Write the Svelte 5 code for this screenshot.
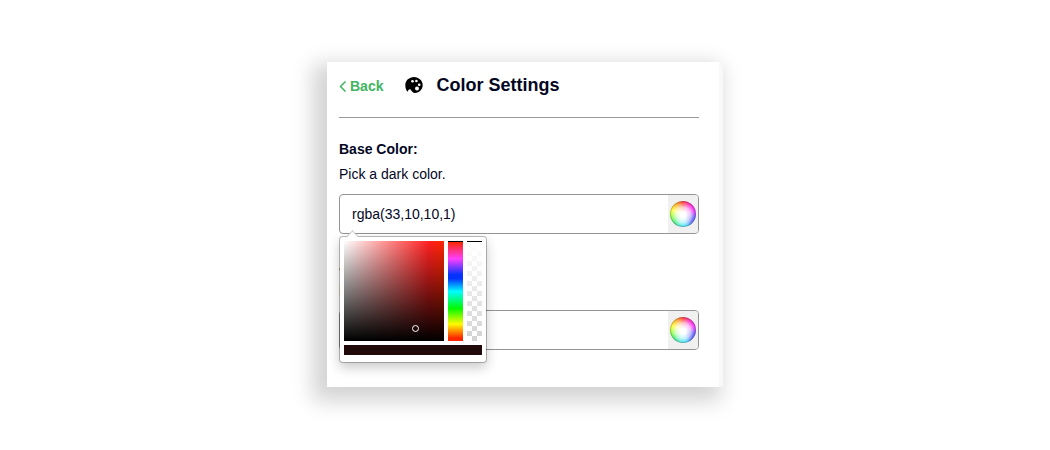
<script>
  let fields = $state([
    { id: 'base', label: 'Base Color:', hint: 'Pick a dark color.', value: 'rgba(33,10,10,1)', open: true },
    { id: 'accent', label: 'Accent Color:', hint: 'Pick a light color.', value: '', open: false }
  ]);
</script>

<main>
  <section class="panel">
    <header>
      <a class="back" href="#back">
        <svg width="8" height="12" viewBox="0 0 8 12" aria-hidden="true"><path d="M6.500 1.500 1.500 6.500l5 5" fill="none" stroke="currentColor" stroke-width="1.500" /></svg>
        Back
      </a>
      <svg class="palette" width="18" height="18" viewBox="0 0 18 18" aria-hidden="true">
        <path d="M9 1C4.200 1 .3 4.600.3 9.200c0 3 .9 5.300 2.500 6.600.2-1.500.9-2.600 2-2.600 1.400 0 1.300 1.700 2.500 2.600.9.800 1.700 1.200 2.700 1.200 4.500-.3 7.700-3.800 7.700-8S13.800 1 9 1Z" />
        <g fill="#fff"><circle cx="7.500" cy="5.300" r="1.300" /><circle cx="11.400" cy="5" r="1.300" /><circle cx="14.200" cy="8.700" r="1.300" /><circle cx="12" cy="12.600" r="2" /></g>
      </svg>
      <h1>Color Settings</h1>
    </header>

    {#each fields as field (field.id)}
      <div class="field">
        <label for={field.id}>{field.label}</label>
        <p>{field.hint}</p>
        <div class="box">
          <input id={field.id} type="text" bind:value={field.value} />
          <button type="button" aria-label="Choose color" onclick={() => (field.open = !field.open)}>
            <span class="wheel"></span>
          </button>
          {#if field.open}
            <div class="picker">
              <div class="channels">
                <div class="shade"><span class="dot"></span></div>
                <div class="hue"></div>
                <div class="alpha"></div>
              </div>
              <div class="preview" style="background: {field.value}"></div>
            </div>
          {/if}
        </div>
      </div>
    {/each}
  </section>
</main>

<style>
  :global(body) {
    margin: 0;
    background: #fff;
  }
  main {
    padding: 62px 24px;
    font: 14px/20px "Liberation Sans", Arial, sans-serif;
    color: #03071f;
  }
  .panel {
    box-sizing: border-box;
    max-width: 396px;
    margin: 0 auto;
    padding: 0 20px 37px 12px;
    border-right: 4px solid #f8f8f8;
    background: #fff;
    box-shadow: -8px 8px 20px 6px #d3d3d3;
  }
  header {
    display: flex;
    align-items: center;
    height: 55px;
    margin-bottom: 21px;
    border-bottom: 1px solid #999;
  }
  .back {
    display: flex;
    align-items: center;
    gap: 3px;
    margin: -8px 22px 0 0;
    font-weight: bold;
    color: #41b560;
    text-decoration: none;
  }
  .palette {
    margin: -10px 13px 0 0;
    fill: #000;
  }
  h1 {
    margin: -10px 0 0;
    font-size: 18px;
    line-height: 24px;
  }
  .field {
    margin-bottom: 21px;
  }
  .field:last-child {
    margin-bottom: 0;
  }
  label {
    display: block;
    margin-bottom: 5px;
    font-weight: bold;
  }
  p {
    margin: 0 0 10px;
  }
  .box {
    position: relative;
    display: flex;
    box-sizing: border-box;
    height: 40px;
    border: 1px solid #949494;
    border-radius: 4px;
    background: #fff;
  }
  .box input {
    flex: 1;
    min-width: 0;
    padding: 0 12px;
    border: 0;
    border-radius: 4px;
    outline: 0;
    background: none;
    font: inherit;
    color: inherit;
  }
  .box button {
    display: flex;
    align-items: center;
    justify-content: center;
    width: 30px;
    padding: 0;
    border: 0;
    border-radius: 0 3px 3px 0;
    background: #f0f0f0;
  }
  .wheel {
    box-sizing: border-box;
    width: 26px;
    height: 26px;
    border: 1px solid rgb(90 90 90 / 35%);
    border-radius: 50%;
    background:
      radial-gradient(circle 14px at 50% 54%, #fff 20%, rgb(255 255 255 / 75%) 55%, transparent 100%),
      conic-gradient(#f22, #f0c 40deg, #e0f 75deg, #22f 110deg, #22f 130deg, #0cf 165deg, #0dd 190deg, #0e3 230deg, #6f0 255deg, #ff0 290deg, #f90 330deg, #f22);
    background-origin: border-box;
  }
  .picker {
    position: absolute;
    z-index: 2;
    top: 41px;
    left: -1px;
    padding: 4px 4px 7px;
    border: 1px solid rgb(0 0 0 / 26%);
    border-radius: 4px;
    background: #fff;
    background-clip: padding-box;
    box-shadow: 0 5px 12px rgb(0 0 0 / 20%);
  }
  .picker::before {
    content: "";
    position: absolute;
    top: -5px;
    left: 8px;
    width: 8px;
    height: 8px;
    border: solid #ccc;
    border-width: 1px 0 0 1px;
    background: linear-gradient(135deg, #fff 50%, transparent 50%);
    transform: rotate(45deg);
  }
  .channels {
    display: flex;
    gap: 4px;
    margin-bottom: 4px;
  }
  .shade {
    position: relative;
    width: 100px;
    height: 100px;
    background: linear-gradient(transparent, #000), linear-gradient(to right, #fff, #ff2020 85%, #ff2600);
  }
  .dot {
    position: absolute;
    left: 68px;
    top: 84px;
    width: 5px;
    height: 5px;
    border: 1px solid #fff;
    border-radius: 50%;
  }
  .hue,
  .alpha {
    box-sizing: border-box;
    width: 15px;
    border-top: 1px solid #000;
  }
  .hue {
    background: linear-gradient(#ff2600, #ff40ff 17%, #0433ff 33%, #0433ff 37%, #00fdff 50%, #00f900 67%, #fffb00 83%, #ff2600 97%);
  }
  .alpha {
    background:
      linear-gradient(#fff, transparent),
      repeating-conic-gradient(#fff 0 25%, #d2d2d2 0 50%) 0 -1px / 10px 10px;
  }
  .preview {
    height: 10px;
  }
</style>
